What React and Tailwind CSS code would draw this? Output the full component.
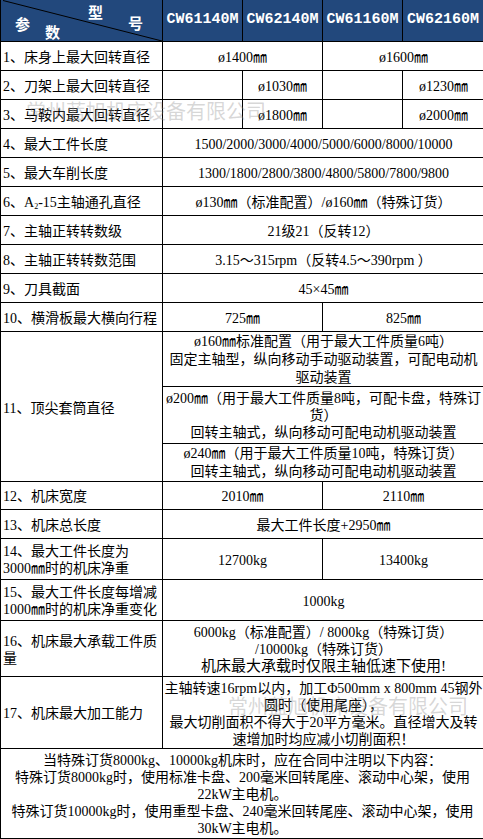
import React from 'react';

const font = "font-['Liberation_Serif','Noto_Sans_CJK_SC',sans-serif]";

function Row({ h, label, children }) {
  return (
    <div className={`flex border-b border-black ${h}`}>
      <div className="w-[162px] shrink-0 border-r border-black flex items-center pl-[2px] pt-[2px] leading-[17px] whitespace-nowrap">
        <div>{label}</div>
      </div>
      {children}
    </div>
  );
}

function Full({ children, className = '' }) {
  return (
    <div className={`flex-1 flex items-center justify-center text-center whitespace-nowrap pt-[2px] ${className}`}>
      <div>{children}</div>
    </div>
  );
}

function Half({ children }) {
  return (
    <div className="w-[160px] shrink-0 border-r border-black flex items-center justify-center whitespace-nowrap pt-[2px]">
      {children}
    </div>
  );
}

function Quarter({ children, last }) {
  return (
    <div
      className={`flex items-center justify-center whitespace-nowrap pt-[2px] ${
        last ? 'flex-1' : 'w-[80px] shrink-0 border-r border-black'
      }`}
    >
      {children}
    </div>
  );
}

export default function App() {
  const models = ['CW61140M', 'CW62140M', 'CW61160M', 'CW62160M'];

  return (
    <div className="w-[483px] min-h-[839px] overflow-hidden bg-white">
      <div className={`relative w-[484px] border-l border-black text-[14px] text-black ${font}`}>
        {/* header */}
        <div className="flex h-[42px] border-b border-black bg-[#22487c] text-white">
          <div className="relative w-[162px] shrink-0 border-r border-black font-bold text-[15px]">
            <svg className="absolute inset-0" width="161" height="41" viewBox="0 0 161 41">
              <line x1="2" y1="0.5" x2="161" y2="41" stroke="#000" strokeWidth="1" />
            </svg>
            <span className="absolute left-[87px] top-[2px]">型</span>
            <span className="absolute left-[127px] top-[13px]">号</span>
            <span className="absolute left-[14px] top-[14px]">参</span>
            <span className="absolute left-[44px] top-[22px]">数</span>
          </div>
          {models.map((m, i) => (
            <div
              key={m}
              className={`flex items-center justify-center font-['Liberation_Mono',monospace] font-bold text-[15px] ${
                i === 3 ? 'w-[81px] shrink-0 border-r border-black' : 'w-[80px] shrink-0 border-r border-black'
              }`}
            >
              {m}
            </div>
          ))}
        </div>

        <Row h="h-[29px]" label="1、床身上最大回转直径">
          <Half>ø1400㎜</Half>
          <Full>ø1600㎜</Full>
        </Row>
        <Row h="h-[29px]" label="2、刀架上最大回转直径">
          <Quarter />
          <Quarter>ø1030㎜</Quarter>
          <Quarter />
          <Quarter last>ø1230㎜</Quarter>
        </Row>
        <Row h="h-[29px]" label="3、马鞍内最大回转直径">
          <Quarter />
          <Quarter>ø1800㎜</Quarter>
          <Quarter />
          <Quarter last>ø2000㎜</Quarter>
        </Row>
        <Row h="h-[29px]" label="4、最大工件长度">
          <Full>1500/2000/3000/4000/5000/6000/8000/10000</Full>
        </Row>
        <Row h="h-[29px]" label="5、最大车削长度">
          <Full>1300/1800/2800/3800/4800/5800/7800/9800</Full>
        </Row>
        <Row
          h="h-[29px]"
          label={
            <span>
              6、A<sub className="text-[8px]">2</sub>-15主轴通孔直径
            </span>
          }
        >
          <Full>ø130㎜（标准配置）/ø160㎜（特殊订货）</Full>
        </Row>
        <Row h="h-[29px]" label="7、主轴正转转数级">
          <Full>21级21（反转12）</Full>
        </Row>
        <Row h="h-[29px]" label="8、主轴正转转数范围">
          <Full>3.15～315rpm（反转4.5～390rpm ）</Full>
        </Row>
        <Row h="h-[29px]" label="9、刀具截面">
          <Full>45×45㎜</Full>
        </Row>
        <Row h="h-[29px]" label="10、横滑板最大横向行程">
          <Half>725㎜</Half>
          <Full>825㎜</Full>
        </Row>

        {/* row 11 with three stacked values */}
        <div className="flex h-[150px] border-b border-black">
          <div className="w-[162px] shrink-0 border-r border-black flex items-center pl-[2px] pt-[4px]">
            11、顶尖套筒直径
          </div>
          <div className="flex-1 flex flex-col text-center whitespace-nowrap">
            <div className="h-[55px] border-b border-black flex flex-col justify-center leading-[18px] pt-[1px]">
              <div>ø160㎜标准配置（用于最大工件质量6吨）</div>
              <div>固定主轴型，纵向移动手动驱动装置，可配电动机</div>
              <div>驱动装置</div>
            </div>
            <div className="h-[57px] border-b border-black flex flex-col justify-center leading-[17px] pt-[1px]">
              <div>ø200㎜（用于最大工件质量8吨，可配卡盘，特殊订</div>
              <div>货）</div>
              <div>回转主轴式，纵向移动可配电动机驱动装置</div>
            </div>
            <div className="flex-1 flex flex-col justify-center leading-[18px] pt-[1px]">
              <div>ø240㎜（用于最大工件质量10吨，特殊订货）</div>
              <div>回转主轴式，纵向移动可配电动机驱动装置</div>
            </div>
          </div>
        </div>

        <Row h="h-[28px]" label="12、机床宽度">
          <Half>2010㎜</Half>
          <Full>2110㎜</Full>
        </Row>
        <Row h="h-[29px]" label="13、机床总长度">
          <Full>最大工件长度+2950㎜</Full>
        </Row>
        <Row
          h="h-[41px]"
          label={
            <>
              <div>14、最大工件长度为</div>
              <div>3000㎜时的机床净重</div>
            </>
          }
        >
          <Half>12700kg</Half>
          <Full>13400kg</Full>
        </Row>
        <Row
          h="h-[41px]"
          label={
            <>
              <div>15、最大工件长度每增减</div>
              <div>1000㎜时的机床净重变化</div>
            </>
          }
        >
          <Full>1000kg</Full>
        </Row>
        <Row
          h="h-[56px]"
          label={
            <>
              <div>16、机床最大承载工件质</div>
              <div>量</div>
            </>
          }
        >
          <Full className="leading-[17px]">
            <div>6000kg（标准配置）/ 8000kg（特殊订货）</div>
            <div>/10000kg（特殊订货）</div>
            <div className="text-[15px]">机床最大承载时仅限主轴低速下使用!</div>
          </Full>
        </Row>
        <Row h="h-[72px]" label="17、机床最大加工能力">
          <Full className="leading-[17px]">
            <div>主轴转速16rpm以内，加工Φ500mm x 800mm 45钢外</div>
            <div>圆时（使用尾座），</div>
            <div>最大切削面积不得大于20平方毫米。直径增大及转</div>
            <div>速增加时均应减小切削面积！</div>
          </Full>
        </Row>

        {/* note */}
        <div className="h-[90px] border-b border-black flex flex-col justify-center text-center leading-[17px] whitespace-nowrap pt-[1px] w-[483px]">
          <div>当特殊订货8000kg、10000kg机床时，应在合同中注明以下内容：</div>
          <div>特殊订货8000kg时，使用标准卡盘、200毫米回转尾座、滚动中心架，使用</div>
          <div>22kW主电机。</div>
          <div>特殊订货10000kg时，使用重型卡盘、240毫米回转尾座、滚动中心架，使用</div>
          <div>30kW主电机。</div>
        </div>

        {/* watermarks */}
        <div className="pointer-events-none absolute left-[25px] top-[99px] text-[20px] leading-[24px] text-[rgba(140,140,140,0.35)] font-['Noto_Sans_CJK_SC',sans-serif] whitespace-nowrap">
          常州蓝旭机床设备有限公司
        </div>
        <div className="pointer-events-none absolute left-[227px] top-[694px] text-[20px] leading-[24px] text-[rgba(140,140,140,0.35)] font-['Noto_Sans_CJK_SC',sans-serif] whitespace-nowrap">
          常州蓝旭机床设备有限公司
        </div>
      </div>
    </div>
  );
}
